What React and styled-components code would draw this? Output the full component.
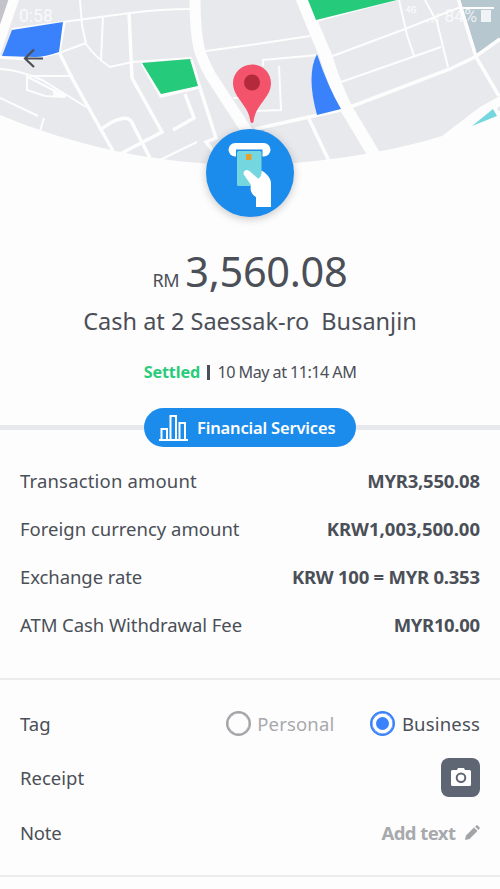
import React, { useState } from "react";
import styled, { createGlobalStyle } from "styled-components";

const GlobalStyle = createGlobalStyle`
  * {
    box-sizing: border-box;
  }
  body {
    margin: 0;
    background: #fdfdfd;
    color: #4b4f57;
    font-family: "Noto Sans", "Open Sans", sans-serif;
  }
`;

const Screen = styled.div`
  width: 500px;
  height: 889px;
  display: flex;
  flex-direction: column;
  overflow: hidden;
`;

const Hero = styled.header`
  position: relative;
  height: 246px;
  flex-shrink: 0;
`;

const MapArt = styled.svg`
  position: absolute;
  top: 0;
  left: 0;
`;

const StatusBar = styled.div`
  position: relative;
  display: flex;
  align-items: center;
  height: 32px;
  padding: 0 9px 0 19px;
  color: rgba(255, 255, 255, 0.75);
  font-family: Roboto, sans-serif;
  font-size: 17.5px;
`;

const Network = styled.span`
  margin-left: auto;
  margin-right: 9px;
  padding-bottom: 12px;
  font-size: 8.5px;
  font-weight: 700;
`;

const Signal = styled.svg`
  margin-right: 4px;
`;

const Battery = styled.span`
  width: 10px;
  height: 12px;
  margin-left: 4px;
  background: rgba(255, 255, 255, 0.8);
`;

const BackButton = styled.button`
  position: relative;
  display: block;
  margin: 16px 0 0 22px;
  padding: 0;
  border: none;
  background: none;
  line-height: 0;
  cursor: pointer;
`;

const Badge = styled.div`
  position: absolute;
  top: 129px;
  left: 206px;
  width: 88px;
  height: 88px;
  border-radius: 50%;
  background: #1c8cec;
  box-shadow: 0 2px 8px rgba(0, 0, 0, 0.22);
`;

const Summary = styled.section`
  display: flex;
  flex-direction: column;
  align-items: center;
  height: 162px;
  flex-shrink: 0;
`;

const Amount = styled.div`
  display: flex;
  align-items: baseline;
  gap: 6px;
  height: 57px;
  line-height: 50px;
  font-size: 41.5px;
`;

const Currency = styled.span`
  font-size: 18px;
  letter-spacing: -0.4px;
`;

const Merchant = styled.div`
  height: 52px;
  line-height: 36px;
  font-size: 23.5px;
  white-space: pre;
`;

const Status = styled.div`
  display: flex;
  align-items: center;
  height: 34px;
  font-size: 16.2px;
`;

const Settled = styled.span`
  color: #2bcb7c;
  font-weight: 700;
  letter-spacing: -0.15px;
`;

const Bar = styled.span`
  width: 2.5px;
  height: 15px;
  margin: 0 8px 0 7px;
  background: #4b4f57;
`;

const CategoryRow = styled.div`
  display: flex;
  align-items: center;
  height: 39px;
  flex-shrink: 0;
`;

const Rule = styled.div`
  flex: 1;
  height: 5px;
  background: #e8e9ed;
`;

const Pill = styled.div`
  display: flex;
  align-items: center;
  width: 212px;
  height: 39px;
  padding-left: 14px;
  gap: 9px;
  border-radius: 20px;
  background: #1c8cec;
  color: #fff;
  font-size: 16.5px;
  font-weight: 600;
`;

const Section = styled.section`
  padding: ${(props) => props.$pad};
  border-bottom: 2px solid #ececef;
  flex-shrink: 0;
`;

const Row = styled.div`
  display: flex;
  align-items: center;
  justify-content: space-between;
  height: ${(props) => props.$height || 48}px;
  font-size: 18.5px;
`;

const Text = styled.span`
  letter-spacing: ${(props) => props.$track || 0}px;
`;

const Value = styled.span`
  font-weight: 700;
  letter-spacing: ${(props) => props.$track || 0}px;
  margin-right: ${(props) => -(props.$track || 0)}px;
`;

const Options = styled.div`
  display: flex;
  gap: 36px;
`;

const Option = styled.button`
  display: flex;
  align-items: center;
  gap: 6.5px;
  padding: 0;
  border: none;
  background: none;
  font: inherit;
  color: ${(props) => (props.$active ? "#4b4f57" : "#a8a9ad")};
  cursor: pointer;
`;

const Radio = styled.span`
  display: flex;
  align-items: center;
  justify-content: center;
  width: 25px;
  height: 25px;
  border: 2.5px solid ${(props) => (props.$active ? "#3a82fb" : "#a3a4a8")};
  border-radius: 50%;
  box-shadow: inset 0 0 0 0.5px ${(props) => (props.$active ? "#3a82fb" : "#a3a4a8")};

  &::after {
    content: "";
    width: 13px;
    height: 13px;
    border-radius: 50%;
    background: ${(props) => (props.$active ? "#3a82fb" : "transparent")};
  }
`;

const CameraButton = styled.button`
  display: flex;
  align-items: center;
  justify-content: center;
  width: 39px;
  height: 39px;
  padding: 0;
  border: none;
  border-radius: 8px;
  background: #5e6673;
  cursor: pointer;
`;

const AddNote = styled.div`
  display: flex;
  align-items: center;
  gap: 9px;
  color: #a8a9ad;
`;

const details = [
  { label: "Transaction amount", value: "MYR3,550.08", track: 0.17, valueTrack: -0.24 },
  { label: "Foreign currency amount", value: "KRW1,003,500.00" },
  { label: "Exchange rate", value: "KRW 100 = MYR 0.353", track: -0.08, valueTrack: -0.25 },
  { label: "ATM Cash Withdrawal Fee", value: "MYR10.00", track: -0.07, valueTrack: -0.35 },
];

const tags = [
  { name: "Personal", track: 0.15 },
  { name: "Business", track: 0.18 },
];

const CityMap = () => (
  <MapArt width="500" height="220" viewBox="0 0 500 220">
    <path
      fill="#e8e9ed"
      d="M0 0H500V96L480 107L442 136C400 149 350 158 295 163C270 165 225 166 200 163C130 158 60 140 0 115Z"
    />
    <path fill="#c3c4ca" d="M0 0H10L0 25Z" />
    <path fill="#b6c7cf" d="M460 0H500V38L477 54Z" />
    <g fill="none" stroke="#fdfdfd" strokeWidth="2">
      <path d="M12 29L63 22L130 13Q160 9 192 9" />
      <path d="M80 0L82 25L86 44Q96 58 110 67L132 62L192 58" />
      <path d="M86 43L59 53M103 16L101 60" />
      <path d="M0 69Q20 70 42 80L86 107M30 76H73" />
      <path d="M26 76L53 90L65 97L45 96L27 90V76M0 98L38 116M44 118L40 131" />
      <path d="M53 90L55 96H66Z" fill="#fdfdfd" />
      <path d="M160 160L197 142M206 51L250 45L310 36" />
      <path d="M263 66V60L318 55M279 66L281 110L256 111M233 98H242" />
      <path d="M316 21L402 -2M330 57L405 29L440 15L458 8H494" />
      <path d="M341 82L441 47M399 0L407 35L414 56M425 0L437 22L448 67" />
    </g>
    <g fill="none" stroke="#fdfdfd" strokeWidth="3.5">
      <path d="M129 13L132 78L162 132L122 153" />
      <path d="M64 22L59 52L73 80L113 151M101 129L112 122Q127 115 131 121L150 158" />
      <path d="M142 63L161 96L199 87M191 60L216 138L206 142L213 151" />
      <path d="M185 94L194 118L173 130M0 57L30 59L59 52" />
      <path d="M255 129L345 109L450 69L475 57L500 39M309 119L329 161" />
      <path d="M458 -2L476 57L499 96" />
    </g>
    <path fill="none" stroke="#fdfdfd" strokeWidth="10" d="M15 -4L-4 52" />
    <path
      fill="none"
      stroke="#fdfdfd"
      strokeWidth="11"
      d="M195 -2Q195 30 199 48Q202 60 211 76L252 139"
    />
    <path
      fill="none"
      stroke="#fdfdfd"
      strokeWidth="12.5"
      d="M301 -4Q315 31 325 54Q336 88 346 108L379 163"
    />
    <path fill="#3a82fb" d="M12 30L63 22L59 52Q45 57 35 57L2 56Z" />
    <path fill="#26ca7b" d="M142 63L190 59L198 86L161 94Z" />
    <path fill="#26ca7b" d="M308 0H397L316 20Z" />
    <path fill="#3a82fb" d="M317 54Q328 87 341 109L317 115Q306 75 317 54Z" />
    <path fill="#74d6de" d="M472 126L493 109L497 116Z" />
    <path fill="#e8e9ed" d="M497 108L500 106V111H498Z" />
    <path
      fill="#f4546b"
      d="M252 64.500C262.500 64.500 271 73 271 83C271 98 255 105 253.500 122Q252 124 250.500 122C249 105 233 98 233 83C233 73 241.500 64.500 252 64.500Z"
    />
    <circle cx="252" cy="82.500" r="8" fill="#b22a3c" />
  </MapArt>
);

const CashIcon = () => (
  <svg width="88" height="88" viewBox="0 0 88 88">
    <rect x="22.500" y="14" width="42" height="13.500" rx="6.700" fill="#fff" />
    <rect x="30" y="20.500" width="26.500" height="8" fill="#1c8cec" />
    <rect x="31" y="22" width="24.500" height="35" rx="1.500" fill="#74d6de" />
    <rect x="40" y="25" width="5.500" height="6" rx="1" fill="#eb9c27" />
    <path
      fill="#fff"
      d="M38.500 42C40.500 40 42.500 41 44 42.500L52 49.500C54.500 49 55.500 46 55.500 41.500C60 44 65 49 65 54V78H50V68C46 66 43.500 62 45 56L38.500 46.500Q36.500 44 38.500 42Z"
    />
  </svg>
);

const App = () => {
  const [tag, setTag] = useState("Business");

  return (
    <Screen>
      <GlobalStyle />
      <Hero>
        <CityMap />
        <StatusBar>
          <span>0:58</span>
          <Network>4G</Network>
          <Signal width="15" height="13" viewBox="0 0 15 13">
            <path d="M0 10h3v3H0zM5 7h3v6H5zM11 3h2v10h-2z" fill="#fff" opacity=".4" />
          </Signal>
          <Text>84%</Text>
          <Battery />
        </StatusBar>
        <BackButton aria-label="Back">
          <svg width="22" height="20" viewBox="0 0 22 20">
            <path
              d="M12 1.500L3 10.500L12 19M3 10.500H21"
              fill="none"
              stroke="#4b4f57"
              strokeWidth="2.200"
            />
          </svg>
        </BackButton>
        <Badge>
          <CashIcon />
        </Badge>
      </Hero>

      <Summary>
        <Amount>
          <Currency>RM</Currency>
          <Text $track={-0.3}>3,560.08</Text>
        </Amount>
        <Merchant>{"Cash at 2 Saessak-ro  Busanjin"}</Merchant>
        <Status>
          <Settled>Settled</Settled>
          <Bar />
          <Text $track={-0.55}>10 May at 11:14 AM</Text>
        </Status>
      </Summary>

      <CategoryRow>
        <Rule />
        <Pill>
          <svg width="30" height="28" viewBox="0 0 30 28" fill="none" stroke="#fff" strokeWidth="2">
            <path d="M1 26H30M3.500 26V15H9V26M12.500 26V2H18V26M21.500 26V9H27V26" />
          </svg>
          <Text $track={-0.17}>Financial Services</Text>
        </Pill>
        <Rule />
      </CategoryRow>

      <Section $pad="9px 20px 30px">
        {details.map((item) => (
          <Row key={item.label}>
            <Text $track={item.track}>{item.label}</Text>
            <Value $track={item.valueTrack}>{item.value}</Value>
          </Row>
        ))}
      </Section>

      <Section $pad="16px 20px 15px">
        <Row $height={54}>
          <Text>Tag</Text>
          <Options>
            {tags.map(({ name, track }) => (
              <Option key={name} $active={tag === name} onClick={() => setTag(name)}>
                <Radio $active={tag === name} />
                <Text $track={track}>{name}</Text>
              </Option>
            ))}
          </Options>
        </Row>
        <Row $height={54}>
          <Text>Receipt</Text>
          <CameraButton aria-label="Add receipt">
            <svg width="20" height="18" viewBox="0 0 20 18">
              <path
                fill="#fff"
                fillRule="evenodd"
                d="M6 2L7 0H13L14 2H18.500Q20 2 20 3.500V16.500Q20 18 18.500 18H1.500Q0 18 0 16.500V3.500Q0 2 1.500 2ZM10 4.500A5.300 5.300 0 1 0 10 15.100A5.300 5.300 0 1 0 10 4.500ZM10 6.500A3.300 3.300 0 1 1 10 13.100A3.300 3.300 0 1 1 10 6.500Z"
              />
            </svg>
          </CameraButton>
        </Row>
        <Row $height={56}>
          <Text $track={-0.2}>Note</Text>
          <AddNote>
            <Value $track={-0.55}>Add text</Value>
            <svg width="15" height="15" viewBox="0 0 15 15">
              <path
                fill="#a3a4a8"
                d="M0 15L1 10.500L9 2.500L12.500 6L4.500 14ZM10 1.600L11.300 .4Q12 0 12.700 .6L14.500 2.300Q15 3 14.500 3.700L13.400 5Z"
              />
            </svg>
          </AddNote>
        </Row>
      </Section>
    </Screen>
  );
};

export default App;
